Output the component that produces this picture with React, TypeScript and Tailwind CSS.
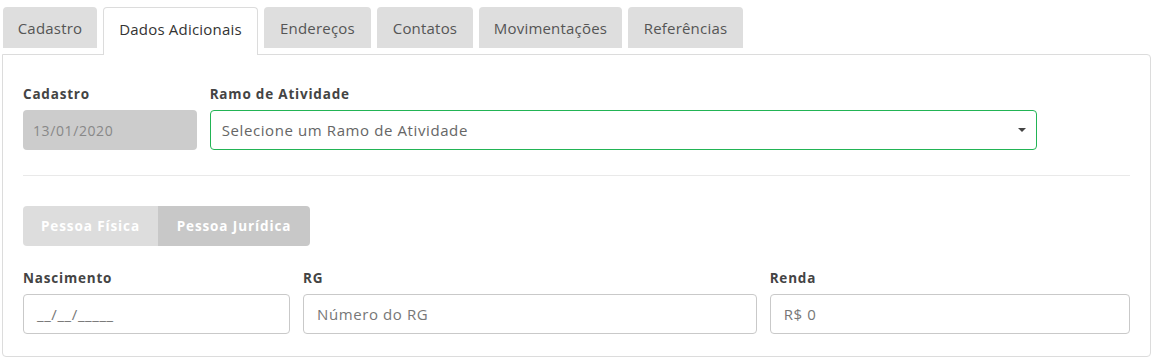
import type { ReactNode } from 'react';

const tabs = [
  { label: 'Cadastro', width: 'w-[94px]' },
  { label: 'Dados Adicionais', width: 'w-[155px]', active: true },
  { label: 'Endereços', width: 'w-[107px]' },
  { label: 'Contatos', width: 'w-[96px]' },
  { label: 'Movimentações', width: 'w-[143px]' },
  { label: 'Referências', width: 'w-[115px]' }
];

function Field({ label, className, children }: { label: string; className: string; children: ReactNode }) {
  return (
    <div className={className}>
      <label className="mb-2 block text-[13.5px] font-bold leading-4 tracking-[0.8px] text-[#444]">{label}</label>
      {children}
    </div>
  );
}

function TextInput({ placeholder }: { placeholder: string }) {
  return (
    <div className="flex h-10 items-center rounded border border-[#c9c9c9] bg-white px-[13px] text-[15px] tracking-[0.6px] text-[#777]">
      {placeholder}
    </div>
  );
}

export default function App() {
  return (
    <div className="min-h-screen bg-white pl-[2px] pr-[6px] pt-[7px] font-['Open_Sans',sans-serif]">
      <div className="flex h-[47px] items-start gap-[6px] pl-px">
        {tabs.map((tab) =>
          tab.active ? (
            <div
              key={tab.label}
              className={`${tab.width} relative z-10 flex h-[48px] items-start justify-center rounded-t border border-b-0 border-[#dcdcdc] bg-white pt-[10px] text-[15px] tracking-[0.2px] text-[#333]`}
            >
              {tab.label}
            </div>
          ) : (
            <div
              key={tab.label}
              className={`${tab.width} flex h-[41px] items-start justify-center rounded-t bg-[#dedede] pt-[10px] text-[15px] tracking-[0.2px] text-[#555]`}
            >
              {tab.label}
            </div>
          )
        )}
      </div>

      <section className="rounded-b rounded-tr border border-[#dcdcdc] px-5 pb-[22px] pt-[31px]">
        <div className="grid grid-cols-12 gap-x-[13px]">
          <Field label="Cadastro" className="col-span-2">
            <div className="flex h-10 items-center rounded bg-[#cccccc] px-[10px] text-[14px] tracking-[0.6px] text-[#888]">13/01/2020</div>
          </Field>
          <Field label="Ramo de Atividade" className="col-span-9">
            <div className="flex h-10 items-center justify-between rounded border border-[#22b455] bg-white pl-[11px] pr-[9px] text-[15px] tracking-[0.6px] text-[#666]">
              <span>Selecione um Ramo de Atividade</span>
              <svg width="10" height="6" viewBox="0 0 10 6">
                <path d="M1 1h8L5 5z" fill="#444" />
              </svg>
            </div>
          </Field>
        </div>

        <hr className="mt-[25px] border-[#e9e9e9]" />

        <div className="mt-[30px] flex h-10 w-[287px] overflow-hidden rounded text-[13.5px] font-bold tracking-[0.9px] text-white">
          <div className="flex w-[135px] items-center justify-center bg-[#dddddd]">Pessoa Física</div>
          <div className="flex flex-1 items-center justify-center bg-[#c8c8c8]">Pessoa Jurídica</div>
        </div>

        <div className="mt-6 grid grid-cols-12 gap-x-[13px]">
          <Field label="Nascimento" className="col-span-3">
            <TextInput placeholder="__/__/_____" />
          </Field>
          <Field label="RG" className="col-span-5">
            <TextInput placeholder="Número do RG" />
          </Field>
          <Field label="Renda" className="col-span-4">
            <TextInput placeholder="R$ 0" />
          </Field>
        </div>
      </section>
    </div>
  );
}
